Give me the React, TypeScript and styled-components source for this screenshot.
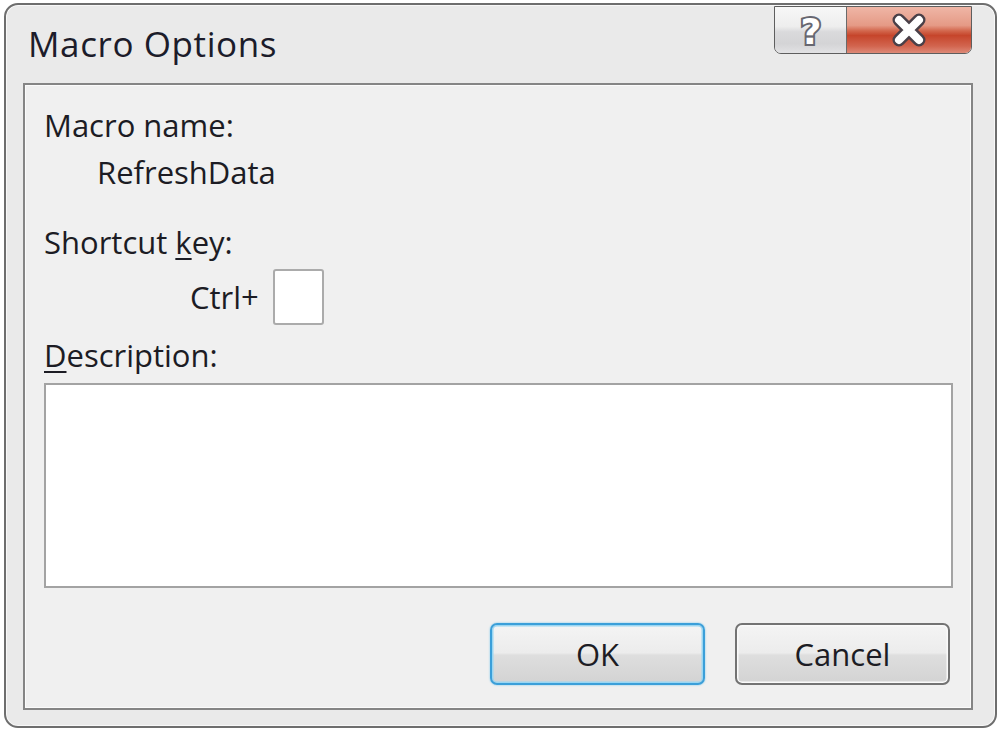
import React from 'react';
import styled, { createGlobalStyle } from 'styled-components';

const GlobalStyle = createGlobalStyle`
  html, body {
    margin: 0;
    padding: 0;
    background: #ffffff;
  }
  body {
    font-family: "Open Sans", "Noto Sans", "Liberation Sans", sans-serif;
    color: #1c1c24;
  }
`;

const Window = styled.div`
  box-sizing: border-box;
  width: 993px;
  height: 725px;
  margin: 3px 0 0 4px;
  border: 2px solid #6e6e6e;
  border-radius: 14px;
  background: #eaeaea;
  box-shadow: inset 0 0 0 1px #f8f8f8;
  display: flex;
  flex-direction: column;
`;

const TitleBar = styled.div`
  height: 78px;
  display: flex;
  justify-content: space-between;
  align-items: flex-start;
  padding: 0 23px 0 22px;
`;

const Title = styled.div`
  margin-top: 19px;
  font-size: 35px;
  font-weight: 500;
  line-height: 40px;
  letter-spacing: 0.6px;
  color: #1c1c2a;
`;

const CaptionButtons = styled.div`
  display: flex;
  height: 48px;
  margin-top: 1px;
  border: 1.5px solid #5e5e5e;
  border-radius: 0 0 7px 7px;
  overflow: hidden;
  box-sizing: border-box;
`;

const CaptionButton = styled.div<{ $width: number; $close?: boolean }>`
  width: ${p => p.$width}px;
  display: flex;
  align-items: center;
  justify-content: center;
  background: ${p =>
    p.$close
      ? 'linear-gradient(to bottom, #efb6a6 0%, #e59a86 40%, #d2664c 52%, #c6452b 62%, #d2654f 85%, #de8a78 100%)'
      : 'linear-gradient(to bottom, #f7f7f7 0%, #eeeeee 42%, #dadadc 54%, #d4d4d6 80%, #e2e2e4 100%)'};
  & + & {
    border-left: 1.5px solid #6a6a6a;
  }
`;

const Panel = styled.div`
  box-sizing: border-box;
  height: 627px;
  margin: 0 22px 0 17px;
  border: 2px solid #858585;
  box-shadow: inset 0 0 0 1px #fbfbfb;
  background: #f0f0f0;
  padding: 20px 18px 23px 19px;
  display: flex;
  flex-direction: column;
`;

const Label = styled.div<{ $indent?: number; $gap?: number }>`
  font-size: 31px;
  font-weight: 500;
  line-height: 40px;
  height: 40px;
  margin-top: ${p => p.$gap ?? 0}px;
  padding-left: ${p => p.$indent ?? 0}px;
  white-space: nowrap;

  u {
    text-decoration-thickness: 2px;
    text-underline-offset: 4px;
  }
`;

const ShortcutRow = styled.div`
  display: flex;
  align-items: center;
  gap: 14px;
  height: 56px;
  margin-top: 7px;
  padding-left: 146px;
`;

const KeyBox = styled.div`
  box-sizing: border-box;
  width: 51px;
  height: 56px;
  background: #ffffff;
  border: 2px solid #ababab;
  border-radius: 3px;
`;

const DescriptionBox = styled.div`
  box-sizing: border-box;
  height: 205px;
  margin-top: 8px;
  background: #ffffff;
  border: 2px solid #a3a3a3;
`;

const ButtonRow = styled.div`
  display: flex;
  justify-content: flex-end;
  gap: 30px;
  margin-top: 35px;
  padding-right: 3px;
`;

const DialogButton = styled.div<{ $default?: boolean }>`
  box-sizing: border-box;
  width: 215px;
  height: 62px;
  display: flex;
  align-items: center;
  justify-content: center;
  font-size: 31px;
  font-weight: 500;
  color: #1c1c24;
  border-radius: 7px;
  border: 2px solid ${p => (p.$default ? '#3b9fd9' : '#737373')};
  background: linear-gradient(to bottom, #f4f4f4 0%, #ececec 48%, #dedede 52%, #d3d3d3 100%);
  box-shadow: ${p =>
    p.$default
      ? 'inset 0 0 0 1.5px #9ad6f2, 0 0 2px #6cc0ea'
      : 'inset 0 0 0 1.5px #fafafa'};
`;

function HelpGlyph() {
  return (
    <svg width="40" height="44" viewBox="0 0 40 44">
      <text
        x="20"
        y="36"
        textAnchor="middle"
        fontFamily="'DejaVu Sans', 'Liberation Sans', sans-serif"
        fontWeight="bold"
        fontSize="36"
        fill="#ffffff"
        stroke="#676770"
        strokeWidth="4"
        paintOrder="stroke"
      >
        ?
      </text>
    </svg>
  );
}

function CloseGlyph() {
  return (
    <svg width="36" height="34" viewBox="0 0 36 34">
      <g strokeLinecap="round">
        <path d="M8 7 L28 27 M28 7 L8 27" stroke="#4a4048" strokeWidth="13" />
        <path d="M8 7 L28 27 M28 7 L8 27" stroke="#ffffff" strokeWidth="8" />
      </g>
    </svg>
  );
}

export default function App() {
  return (
    <>
      <GlobalStyle />
      <Window>
        <TitleBar>
          <Title>Macro Options</Title>
          <CaptionButtons>
            <CaptionButton $width={71}>
              <HelpGlyph />
            </CaptionButton>
            <CaptionButton $width={124} $close>
              <CloseGlyph />
            </CaptionButton>
          </CaptionButtons>
        </TitleBar>
        <Panel>
          <Label>Macro name:</Label>
          <Label $indent={53} $gap={7}>
            RefreshData
          </Label>
          <Label $gap={30}>
            Shortcut <u>k</u>ey:
          </Label>
          <ShortcutRow>
            <Label>Ctrl+</Label>
            <KeyBox />
          </ShortcutRow>
          <Label $gap={10}>
            <u>D</u>escription:
          </Label>
          <DescriptionBox />
          <ButtonRow>
            <DialogButton $default>OK</DialogButton>
            <DialogButton>Cancel</DialogButton>
          </ButtonRow>
        </Panel>
      </Window>
    </>
  );
}
